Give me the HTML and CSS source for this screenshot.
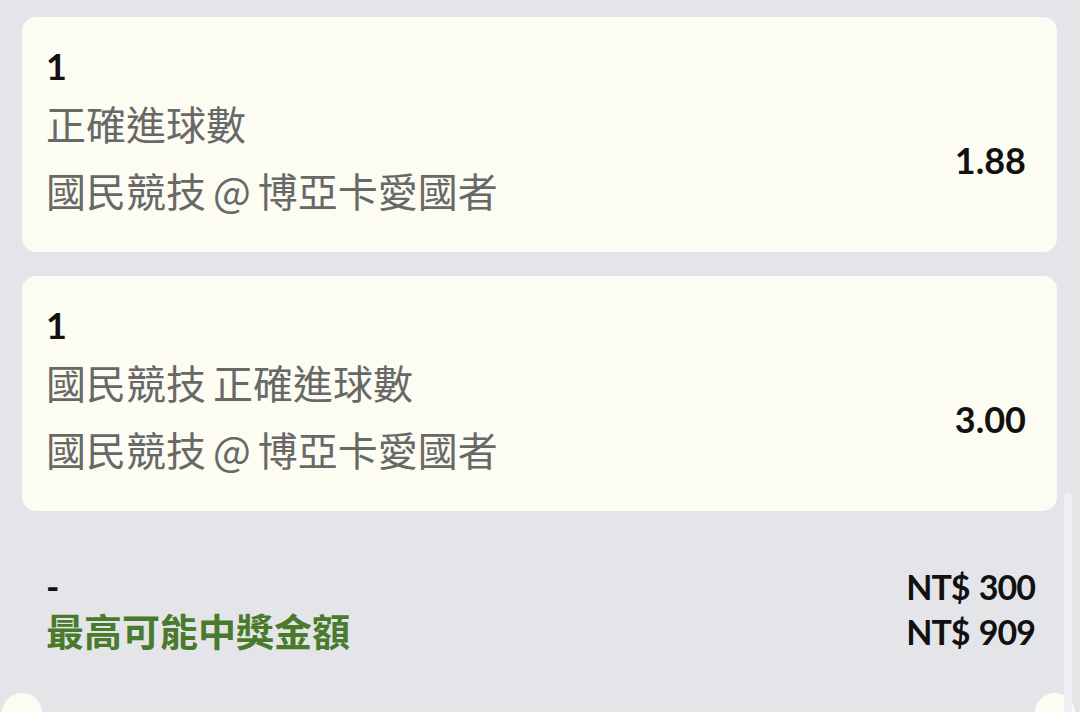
FILE: index.html
```html
<!DOCTYPE html>
<html lang="zh-Hant">
<head>
<meta charset="utf-8">
<title>投注單</title>
<link rel="stylesheet" href="styles.css">
</head>
<body>
<div class="page">
  <div class="list">
    <div class="card">
      <div class="sel">1</div>
      <div class="row">
        <div class="desc">
          <div class="line">正確進球數</div>
          <div class="line">國民競技 @ 博亞卡愛國者</div>
        </div>
        <div class="odds">1.88</div>
      </div>
    </div>
    <div class="card">
      <div class="sel">1</div>
      <div class="row">
        <div class="desc">
          <div class="line">國民競技 正確進球數</div>
          <div class="line">國民競技 @ 博亞卡愛國者</div>
        </div>
        <div class="odds">3.00</div>
      </div>
    </div>
  </div>
  <div class="summary">
    <div class="sum-left">
      <div class="dash">-</div>
      <div class="label">最高可能中獎金額</div>
    </div>
    <div class="sum-right">
      <div class="amt">NT$ 300</div>
      <div class="amt">NT$ 909</div>
    </div>
  </div>
  <div class="footer">
    <span class="dot"></span>
    <span class="dot"></span>
  </div>
  <div class="scrollbar"></div>
</div>
</body>
</html>
```

FILE: styles.css
```css
html, body {
  margin: 0;
  padding: 0;
}
body {
  background: #e4e5e9;
  width: 1080px;
  height: 712px;
  overflow: hidden;
  font-family: Lato, "Noto Sans CJK TC", sans-serif;
  color: #111;
}
.page {
  position: relative;
  height: 712px;
  overflow: hidden;
}
.list {
  display: flex;
  flex-direction: column;
  gap: 24px;
  padding: 17px 23px 0 22px;
}
.card {
  background: #fcfcf3;
  border-radius: 14px;
  padding: 28px 31px 28px 24px;
  height: 235px;
  box-sizing: border-box;
}
.sel {
  font-weight: 700;
  font-size: 36px;
  line-height: 43px;
}
.row {
  display: flex;
  align-items: center;
  justify-content: space-between;
  padding-top: 2px;
}
.desc {
  display: flex;
  flex-direction: column;
}
.line {
  font-family: "Noto Sans CJK TC", sans-serif;
  font-size: 40px;
  line-height: 67px;
  color: #686866;
  word-spacing: -2px;
  white-space: nowrap;
}
.odds {
  font-weight: 700;
  font-size: 36px;
  line-height: 43px;
  margin-top: 6px;
}
.summary {
  display: flex;
  justify-content: space-between;
  padding: 53px 45px 0 46px;
}
.sum-left, .sum-right {
  display: flex;
  flex-direction: column;
}
.sum-right {
  align-items: flex-end;
}
.dash {
  font-weight: 700;
  font-size: 36px;
  line-height: 44px;
}
.label {
  font-family: Lato, "Noto Sans CJK TC", sans-serif;
  font-weight: 700;
  font-size: 38px;
  line-height: 46px;
  color: #4a7a2c;
}
.amt {
  font-weight: 700;
  font-size: 34px;
  line-height: 45px;
  letter-spacing: -1px;
  word-spacing: 2px;
}
.footer {
  display: flex;
  justify-content: space-between;
  padding: 39px 5px 0 2px;
}
.dot {
  width: 40px;
  height: 40px;
  border-radius: 50%;
  background: #fcfcf3;
}
.scrollbar {
  position: absolute;
  left: 1064px;
  top: 493px;
  width: 8px;
  height: 240px;
  border-radius: 4px;
  background: #eeeff2;
}
```
